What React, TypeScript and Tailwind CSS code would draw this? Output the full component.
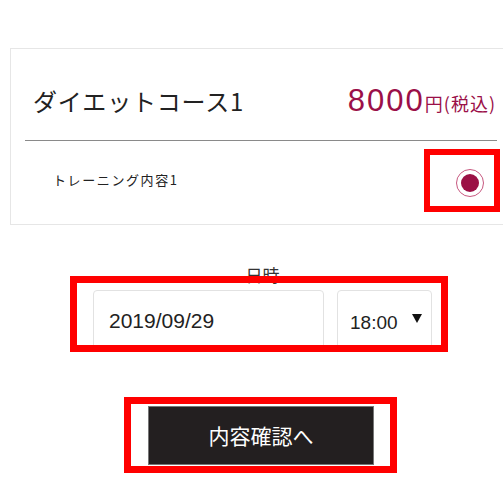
const JP = { fontFamily: '"Noto Sans CJK JP", "Liberation Sans", sans-serif' };

// --- Course card -------------------------------------------------------------

function CourseCard() {
  return (
    <div className="ml-[10px] mt-[48px] h-[177px] w-[500px] border border-[#e6e6e6] bg-white">
      {/* Header */}
      <div className="flex items-baseline pl-[22px] pr-[13px] pt-[34px]">
        <h2 className="text-[24px] leading-[36px] tracking-[0.8px] text-[#222]">ダイエットコース1</h2>
        <div className="ml-auto flex items-baseline text-[#9b0f48]">
          <span className="text-[31px] leading-[36px] tracking-[2px]" style={{ fontFamily: '"Liberation Sans", sans-serif' }}>
            8000
          </span>
          <span className="text-[18px] leading-[36px]">円</span>
          <span className="ml-[1px] text-[18px] leading-[36px] tracking-[1px]">(税込)</span>
        </div>
      </div>
      <div className="ml-[14px] mt-[19px] h-px w-[472px] bg-[#8a8a8a]" />

      {/* Training item */}
      <div className="mt-[28px] flex h-[28px] items-center pl-[42px] pr-[25px]">
        <span className="mb-[6px] text-[13px] tracking-[1.6px] text-[#222]">トレーニング内容1</span>
        <span className="ml-auto flex h-[28px] w-[28px] items-center justify-center rounded-full border border-[#c7587f]">
          <span className="h-[18px] w-[18px] rounded-full bg-[#9b1045]" />
        </span>
      </div>
    </div>
  );
}

// --- Date / time picker ------------------------------------------------------

function DateTimePicker() {
  return (
    <div className="ml-[93px] mt-[38px] w-[339px]">
      <div className="text-center text-[17px] leading-[24px] text-[#333]">日時</div>
      <div className="mt-[3px] flex gap-[13px]" style={{ fontFamily: '"Liberation Sans", sans-serif' }}>
        <div className="flex h-[62px] w-[231px] items-center rounded-[4px] border border-[#e2e2e2] pl-[15px] text-[21px] text-[#222]">
          2019/09/29
        </div>
        <div className="flex h-[62px] w-[95px] items-center rounded-[4px] border border-[#e2e2e2] pl-[12px] pr-[9px] text-[19px] text-[#222]">
          <span className="mt-[4px]">18:00</span>
          <svg className="mb-[5px] ml-auto" width="10" height="9" viewBox="0 0 10 9">
            <polygon points="0,0 10,0 5,9" fill="#111" />
          </svg>
        </div>
      </div>
    </div>
  );
}

// --- App ---------------------------------------------------------------------

export default function App() {
  return (
    <div className="relative h-[502px] w-[503px] overflow-hidden bg-white" style={JP}>
      <CourseCard />
      <DateTimePicker />

      <button className="ml-[148px] mt-[54px] flex h-[59px] w-[226px] items-center justify-center border border-[#777] bg-[#231f20] text-[21px] text-white">
        内容確認へ
      </button>

      {/* Highlight overlays */}
      <div className="pointer-events-none absolute left-[424px] top-[149px] h-[63px] w-[76px] border-[6px] border-[#ff0000]" />
      <div className="pointer-events-none absolute left-[70px] top-[276px] h-[76px] w-[378px] border-[7px] border-[#ff0000]" />
      <div className="pointer-events-none absolute left-[124px] top-[397px] h-[76px] w-[273px] border-[7px] border-[#ff0000]" />
    </div>
  );
}
